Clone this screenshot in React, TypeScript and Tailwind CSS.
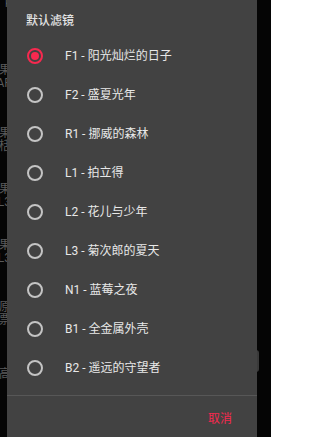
import React from "react"

const filters = [
  "F1 - 阳光灿烂的日子",
  "F2 - 盛夏光年",
  "R1 - 挪威的森林",
  "L1 - 拍立得",
  "L2 - 花儿与少年",
  "L3 - 菊次郎的夏天",
  "N1 - 蓝莓之夜",
  "B1 - 全金属外壳",
  "B2 - 遥远的守望者",
]

// fragments of the list behind the dialog, cut by its left edge
const behind = [
  { text: "k", top: "mt-[-4px]" },
  { text: "效果", top: "mt-[53px]" },
  { text: "AF", top: "mt-[-1px]" },
  { text: "效果", top: "mt-[36px]" },
  { text: "栝", top: "mt-[-1px]" },
  { text: "效果", top: "mt-[29px]" },
  { text: "L3", top: "mt-[-1px]" },
  { text: "效果", top: "mt-[29px]" },
  { text: "L3", top: "mt-[-1px]" },
  { text: "原", top: "mt-[35px]" },
  { text: "票", top: "mt-[-1px]" },
  { text: "高", top: "mt-[40px]" },
  { text: "SE", top: "mt-[56px]" },
]

const Radio = ({ checked }: { checked: boolean }) => (
  <span
    className={
      checked
        ? "flex h-4 w-4 items-center justify-center rounded-full border-2 border-[#f7294f]"
        : "flex h-4 w-4 items-center justify-center rounded-full border-2 border-[#c4c4c4]"
    }
  >
    {checked && <span className="h-2 w-2 rounded-full bg-[#f7294f]" />}
  </span>
)

export default function App() {
  const selected = 0

  return (
    <div
      className="relative h-[437px] w-[271px] overflow-hidden bg-[#050505]"
      style={{ fontFamily: "Roboto, 'Noto Sans CJK SC', sans-serif" }}
    >
      {/* background page */}
      <div className="flex h-full w-[7px] flex-col overflow-hidden text-[12px] leading-[14px] text-[#5a5a5a]">
        {behind.map((b, i) => (
          <div key={i} className={`flex justify-end whitespace-nowrap ${b.top}`}>
            <span className="mr-[-4px]">{b.text}</span>
          </div>
        ))}
      </div>
      <div className="absolute right-[12px] top-[350px] h-[22px] w-[3px] rounded-r bg-[#3a3a3a]" />

      {/* dialog */}
      <div className="absolute left-[7px] top-0 flex h-[437px] w-[250px] flex-col bg-[#424242]">
        <div className="px-[19px] pt-[12px] text-[12px] font-medium leading-[18px] text-[#e4e4e4]">
          默认滤镜
        </div>
        <div className="mt-[6px] flex flex-col">
          {filters.map((f, i) => (
            <div key={f} className="flex h-[39px] items-center pl-[20px]">
              <Radio checked={i === selected} />
              <span className="ml-[22px] text-[12px] text-[#e8e8e8]">{f}</span>
            </div>
          ))}
        </div>
        <div className="mt-[8px] h-px bg-[#575757]" />
        <div className="flex justify-end pr-[25px] pt-[15px]">
          <span className="text-[12px] leading-[16px] text-[#f7294f]">取消</span>
        </div>
      </div>
    </div>
  )
}
